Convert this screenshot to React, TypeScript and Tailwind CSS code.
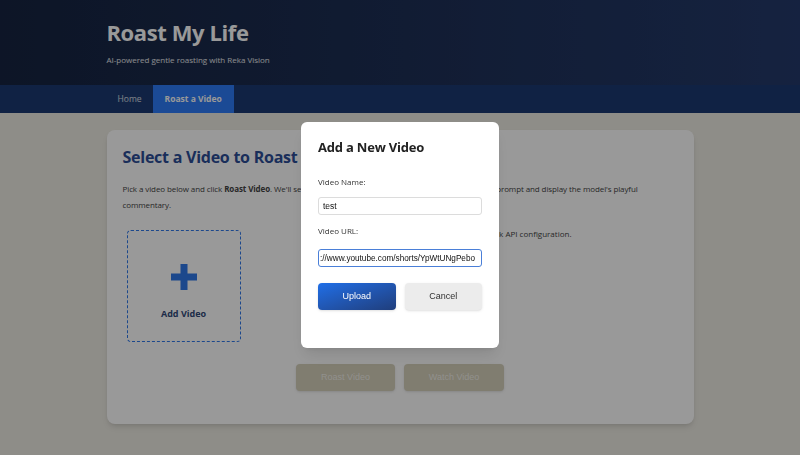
import React from "react";

function PlusIcon() {
  return (
    <svg width="26" height="26" viewBox="0 0 26 26" className="block">
      <rect x="9.5" y="0" width="7" height="26" fill="#2f78ea" />
      <rect x="0" y="9.5" width="26" height="7" fill="#2f78ea" />
    </svg>
  );
}

export default function App() {
  return (
    <div className="relative min-h-screen bg-[#edebe3] font-['Open_Sans',sans-serif]">
      <header className="h-[85px] bg-gradient-to-r from-[#162441] to-[#243a6b]">
        <div className="mx-auto w-[587px] pt-[18px]">
          <h1 className="text-[22px] font-bold leading-[28px] tracking-[-0.4px] text-white">Roast My Life</h1>
          <p className="mt-[8px] text-[8px] leading-[12px] text-white/90">AI-powered gentle roasting with Reka Vision</p>
        </div>
      </header>

      <nav className="h-[28px] bg-[#1b3a72]">
        <div className="mx-auto flex h-full w-[587px]">
          <a className="flex items-center px-[11px] text-[8.5px] text-white/80">Home</a>
          <a className="flex items-center bg-[#2d7cf8] px-[12px] text-[8.5px] font-bold text-white">Roast a Video</a>
        </div>
      </nav>

      <main className="pt-[17px] pb-[31px]">
        <section className="mx-auto h-[294px] w-[587px] rounded-lg bg-white px-4 pt-[17px] shadow-md">
          <h2 className="text-[16px] font-bold leading-[20px] tracking-[-0.25px] text-[#2c4d97]">Select a Video to Roast</h2>
          <p className="mt-[14px] text-[8px] leading-[16px] tracking-[-0.1px] text-[#444]">
            Pick a video below and click <b>Roast Video</b>. We'll send the clip to Reka Vision together with a gentle roast prompt and display the model's playful
            <br />
            commentary.
          </p>

          <div className="mt-[17px] flex items-start gap-4 pl-1">
            <div className="flex h-[112px] w-[114px] flex-col items-center rounded border border-dashed border-[#2f78ea] pt-[33px]">
              <PlusIcon />
              <span className="mt-[17px] text-[9px] font-bold text-[#324a78]">Add Video</span>
            </div>
            <p className="-mt-[2px] w-[315px] whitespace-nowrap text-right text-[8px] leading-[12px] text-[#444]">
              No videos found yet. Add one above, or check API configuration.
            </p>
          </div>

          <div className="mt-[22px] flex justify-center gap-[9px] font-['Liberation_Sans',sans-serif]">
            <button disabled className="h-[27px] w-[99px] rounded bg-[#d5d0bb] text-[9px] text-white/70 shadow">Roast Video</button>
            <button disabled className="h-[27px] w-[100px] rounded bg-[#d5d0bb] text-[9px] text-white/70 shadow">Watch Video</button>
          </div>
        </section>
      </main>

      <div className="fixed inset-0 bg-black/40" />

      <div className="fixed inset-0 flex items-start justify-center pt-[122px]">
        <div className="h-[226px] w-[198px] rounded-[6px] bg-white px-[17px] pt-[17px] shadow-lg">
          <h3 className="text-[13px] font-bold leading-[16px] tracking-[-0.2px] text-[#222]">Add a New Video</h3>

          <label className="mt-[21px] block text-[8px] leading-[12px] text-[#333]">Video Name:</label>
          <input
            readOnly
            value="test"
            className="mt-[9px] block h-[18px] w-full rounded-[3px] border border-[#dcdcdc] px-[4px] font-['Liberation_Sans',sans-serif] text-[8.5px] text-[#111] outline-none"
          />

          <label className="mt-[10px] block text-[8px] leading-[12px] text-[#333]">Video URL:</label>
          <input
            readOnly
            value="://www.youtube.com/shorts/YpWtUNgPebo"
            className="mt-[12px] block h-[18px] w-full rounded-[3px] border border-[#4a7fd8] px-[1px] font-['Liberation_Sans',sans-serif] text-[8.2px] text-[#111] outline-none"
          />

          <div className="mt-[16px] flex gap-[9px] font-['Liberation_Sans',sans-serif]">
            <button className="h-[27px] w-[78px] rounded-[4px] bg-gradient-to-br from-[#1f6fe8] to-[#1f3e7c] text-[9px] text-white shadow">Upload</button>
            <button className="h-[27px] w-[78px] rounded-[4px] bg-[#ececec] text-[9px] text-[#333] shadow">Cancel</button>
          </div>
        </div>
      </div>
    </div>
  );
}
